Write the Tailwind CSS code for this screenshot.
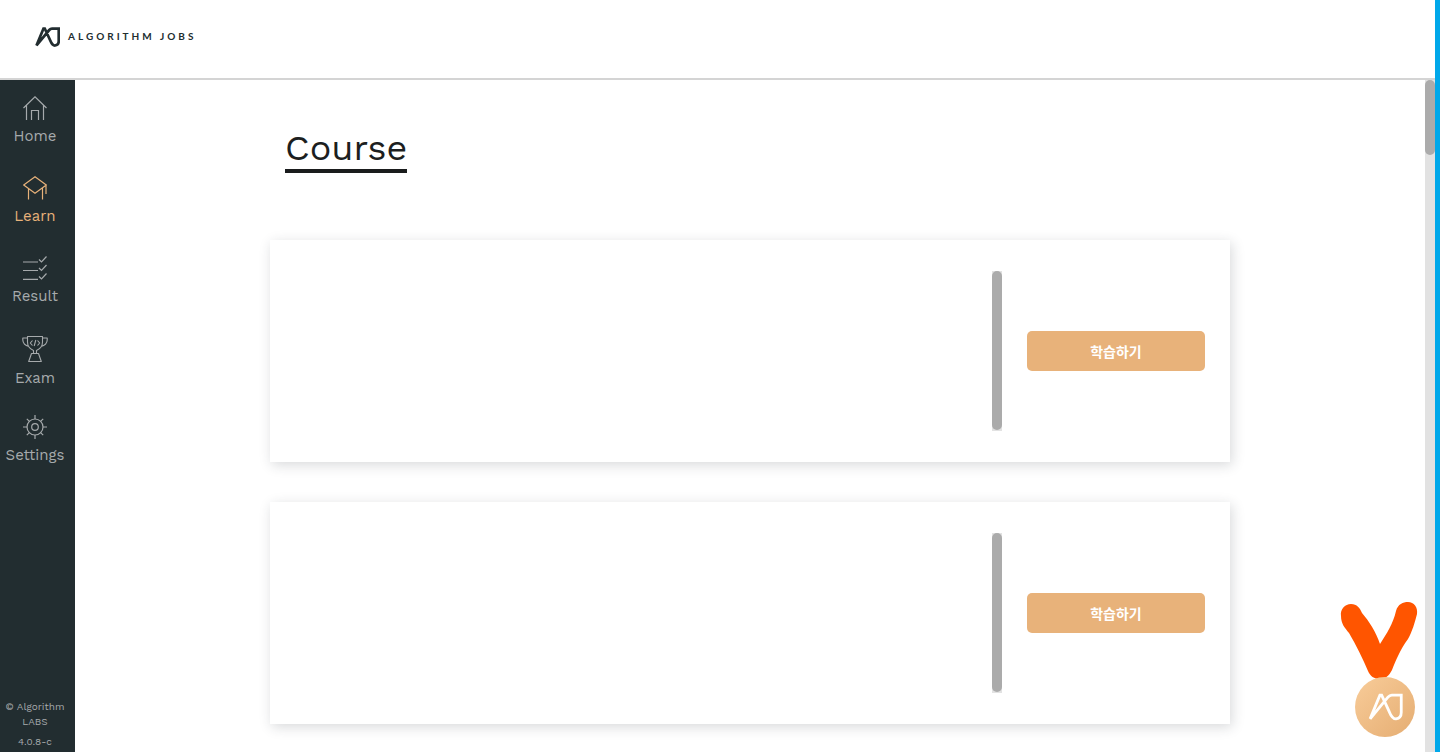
<!DOCTYPE html>
<html lang="ko">
<head>
<meta charset="utf-8">
<meta name="viewport" content="width=device-width, initial-scale=1">
<title>Algorithm Jobs – Course</title>
<script src="https://cdn.jsdelivr.net/npm/@tailwindcss/browser@4"></script>
</head>
<body class="flex h-screen overflow-hidden bg-[#00a8ea] pr-[5px] font-['Work_Sans','Inter','Noto_Sans_CJK_KR',sans-serif] text-[#1c1e20]">
<svg class="hidden" aria-hidden="true">
  <symbol id="aj" viewBox="0 0 100 80">
    <path d="M6 74 34 6H39L61 54Q69 74 80 74 95 72 95 56V6H68Q62 6 57 12Z" fill="none" stroke="currentColor" stroke-linejoin="miter" stroke-miterlimit="2"/>
  </symbol>
</svg>
<div class="flex min-w-0 flex-1 flex-col bg-white">
  <header class="flex h-20 shrink-0 items-center border-b-2 border-[#d4d4d4] px-[35px] pb-1">
    <a href="#" aria-label="Algorithm Jobs" class="flex items-center gap-2 text-[#222d30]">
      <svg class="h-5 w-[25px] stroke-[11]" aria-hidden="true"><use href="#aj"/></svg>
      <span class="pb-[2px] font-['Lato'] text-[10px] leading-4 font-bold tracking-[3px]">ALGORITHM JOBS</span>
    </a>
  </header>

  <div class="flex min-h-0 flex-1">
    <aside class="flex w-[75px] shrink-0 flex-col justify-between bg-[#222d30] pr-[5px] text-[#a6aaac]">
      <nav class="text-center text-[15px] leading-6">
        <a href="#" class="flex h-20 flex-col items-center gap-1 pt-4">
          <svg class="size-6 shrink-0" viewBox="0 0 24 24" fill="none" stroke="currentColor" stroke-width="1.200" aria-hidden="true"><path d="M.5 12 12 .8 23.500 12M3.500 9.500V24M20.500 9.500V24M8.500 24V14.500H15.500V24"/></svg>
          <span>Home</span>
        </a>
        <a href="#" aria-current="page" class="flex h-20 flex-col items-center gap-1 pt-4 text-[#e8b27a]">
          <svg class="size-6 shrink-0" viewBox="0 0 24 24" fill="none" stroke="currentColor" stroke-width="1.200" aria-hidden="true"><path d="M12 .8 23.300 9 12 17.300.7 9ZM5.500 12.500V23.500M19.500 12V23.500M23 9V18"/></svg>
          <span>Learn</span>
        </a>
        <a href="#" class="flex h-20 flex-col items-center gap-1 pt-4">
          <svg class="size-6 shrink-0" viewBox="0 0 24 24" fill="none" stroke="currentColor" stroke-width="1.200" aria-hidden="true"><path d="M0 6H15M0 14.500H15M0 23.300H15M16 3.500 18.500 6 23.500.5M16 12 18.500 14.500 23.500 9M16 20.500 18.500 23 23.500 17.500"/></svg>
          <span>Result</span>
        </a>
        <a href="#" class="flex h-[82px] flex-col items-center gap-[3px] pt-[15px]">
          <svg class="h-7 w-[26px] shrink-0" viewBox="0 0 26 28" fill="none" stroke="currentColor" stroke-width="1.100" stroke-linejoin="round" aria-hidden="true"><path d="M5.500 1.500H20.500V7Q20.500 13 14.500 15.500V18.500H11.500V15.500Q5.500 13 5.500 7ZM5.500 3H.8V5Q1 10 7 11.500M20.500 3H25.200V5Q25 10 19 11.500M9.500 18.500H16.500L19.300 26.500H6.700ZM10.500 5.500 8.300 8 10.500 10.500M15.500 5.500 17.700 8 15.500 10.500M13.800 5 12.200 11"/></svg>
          <span>Exam</span>
        </a>
        <a href="#" class="flex h-20 flex-col items-center gap-1 pt-[13px]">
          <svg class="size-6 shrink-0" viewBox="0 0 24 24" fill="none" stroke="currentColor" stroke-width="1.200" aria-hidden="true"><circle cx="12" cy="12" r="8"/><circle cx="12" cy="12" r="3.300"/><path d="M12 0V4M12 20V24M0 12H4M20 12H24M3.800 3.800 6.400 6.400M17.600 17.600 20.200 20.200M20.200 3.800 17.600 6.400M6.400 17.600 3.800 20.200"/></svg>
          <span>Settings</span>
        </a>
      </nav>
      <footer class="text-center text-[10px] leading-[15px]">
        <p>© Algorithm LABS</p>
        <p class="mt-[5px] pb-[3px]">4.0.8-c</p>
      </footer>
    </aside>

    <main class="min-w-0 flex-1 overflow-hidden px-6">
      <div class="mx-auto max-w-[960px]">
        <h1 class="mt-12 ml-[15px] w-fit border-b-4 border-[#1a1c1d] text-4xl leading-[41px] font-normal">Course</h1>
        <div class="mt-[67px] flex flex-col gap-10">
          <section class="flex h-[222px] items-center bg-white pr-[25px] shadow-[2px_3px_12px_rgba(40,45,55,0.18)]">
            <div class="flex h-40 flex-1 justify-end"><div class="w-[10px] bg-[#e2e2e2]"><div class="h-[159px] rounded-full bg-[#ababab]"></div></div></div>
            <button type="button" class="ml-[25px] h-10 w-[178px] rounded-[5px] bg-[#e8b27a] font-['Noto_Sans_CJK_KR',sans-serif] text-sm font-bold text-white">학습하기</button>
          </section>
          <section class="flex h-[222px] items-center bg-white pr-[25px] shadow-[2px_3px_12px_rgba(40,45,55,0.18)]">
            <div class="flex h-40 flex-1 justify-end"><div class="w-[10px] bg-[#e2e2e2]"><div class="h-[159px] rounded-full bg-[#ababab]"></div></div></div>
            <button type="button" class="ml-[25px] h-10 w-[178px] rounded-[5px] bg-[#e8b27a] font-['Noto_Sans_CJK_KR',sans-serif] text-sm font-bold text-white">학습하기</button>
          </section>
        </div>
      </div>
    </main>
    <div class="w-[10px] shrink-0 bg-[#e2e2e2]"><div class="h-[75px] rounded-full bg-[#ababab]"></div></div>
  </div>
</div>

<div class="fixed right-[22px] bottom-[15px] flex flex-col items-end">
  <svg class="h-[78px] w-[78px]" viewBox="0 0 78 78" aria-hidden="true"><path d="M1 14C0 7 5 2 11 2C17 2 20 6 22 11C29 19 36 30 40 42C47 31 53 22 56 9C58 2 63 0 68 0C74 0 78 5 77 12C75 20 72 30 68 37C60 48 56 58 52 68C49 74 45 77 40 77C34 77 30 74 28 69C23 57 16 43 9 31C5 26 1 22 1 14Z" fill="#ff5500"/></svg>
  <button type="button" aria-label="Algorithm Jobs chat" class="-mt-[3px] mr-[3px] flex size-[60px] items-center justify-center rounded-full bg-linear-to-br from-[#f8cc99] to-[#e5ad72] text-white">
    <svg class="h-[28px] w-[35px] stroke-[8]" aria-hidden="true"><use href="#aj"/></svg>
  </button>
</div>
</body>
</html>
